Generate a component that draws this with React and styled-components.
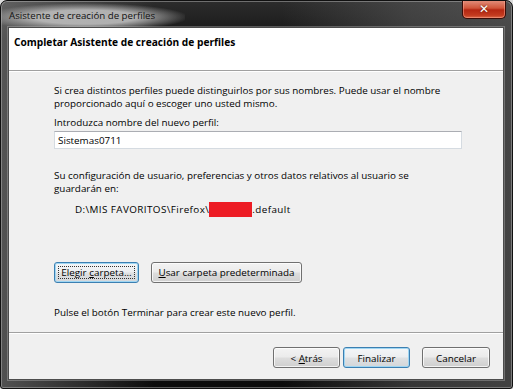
import React from "react";
import styled, { createGlobalStyle, css } from "styled-components";

const Global = createGlobalStyle`
  html, body { margin: 0; padding: 0; background: #dcdcdc; }
  body { width: 513px; height: 389px; overflow: hidden; }
  * { box-sizing: border-box; }
`;

const FONT = `"Open Sans", "Noto Sans", sans-serif`;

const Window = styled.div`
  width: 513px;
  height: 389px;
  display: flex;
  flex-direction: column;
  border: 1px solid #101010;
  border-radius: 7px 7px 3px 3px;
  box-shadow: inset 0 0 0 1px rgba(190, 190, 190, 0.45);
  background:
    linear-gradient(90deg, rgba(150,150,150,0.5) 0, rgba(0,0,0,0) 30%, rgba(0,0,0,0) 55%, rgba(95,95,95,0.5) 80%, rgba(110,110,110,0.55) 100%),
    linear-gradient(180deg, #2c2c2c 0, #161616 10%, #0c0c0c 100%);
  font-family: ${FONT};
  overflow: hidden;
`;

const TitleBar = styled.div`
  height: 26px;
  display: flex;
  align-items: flex-start;
  justify-content: space-between;
  padding: 0 6px 0 0;
`;

const Title = styled.div`
  height: 26px;
  display: flex;
  align-items: center;
  padding: 2px 30px 0 8px;
  font-size: 9.7px;
  color: #111;
  background: radial-gradient(ellipse 56% 54% at 46% 62%, rgba(190,190,190,0.9) 50%, rgba(190,190,190,0) 100%);
`;

const CloseButton = styled.div`
  width: 44px;
  height: 19px;
  margin-top: -1px;
  border: 1px solid #3a0b06;
  border-top: none;
  border-radius: 0 0 5px 5px;
  box-shadow: inset 0 0 0 1px rgba(255, 170, 150, 0.5);
  background: linear-gradient(180deg, #e49380 0%, #d0553a 45%, #b52712 55%, #c33a1f 85%, #db6a48 100%);
  display: flex;
  align-items: center;
  justify-content: center;
  color: #fff;
  font-family: "DejaVu Sans", sans-serif;
  font-weight: bold;
  font-size: 12px;
  text-shadow: 0 0 2px #4a1208;
`;

const Client = styled.div`
  flex: 1;
  margin: 0 8px 8px 7px;
  border: 1px solid #4c4c4c;
  box-shadow: 0 0 0 1px rgba(200, 200, 200, 0.35);
  display: flex;
  flex-direction: column;
  background: #f0f0f0;
`;

const Header = styled.div`
  height: 42px;
  background: #fff;
  padding: 7px 0 0 5px;
  font-size: 10.2px;
  font-weight: 700;
  color: #000;
`;

const Separator = styled.div`
  height: 2px;
  border-top: 1px solid #a0a0a0;
  border-bottom: 1px solid #ffffff;
`;

const Body = styled.div`
  flex: 1;
  padding: 12px 30px 0 45px;
  display: flex;
  flex-direction: column;
  font-size: 9.85px;
  line-height: 13px;
  color: #000;
`;

const Text = styled.div`
  margin-top: ${(p) => p.$mt || 0}px;
  padding-left: ${(p) => p.$indent || 0}px;
  letter-spacing: ${(p) => p.$ls || 0}px;
  white-space: nowrap;
`;

const Input = styled.div`
  margin-top: ${(p) => p.$mt || 0}px;
  width: 408px;
  height: 18px;
  background: #fff;
  border: 1px solid #d5dbe1;
  border-top-color: #abadb3;
  padding: 0 3px;
  display: flex;
  align-items: center;
`;

const Redact = styled.span`
  display: inline-block;
  width: 43px;
  height: 15px;
  vertical-align: -4px;
  background: #ed1c24;
`;

const ButtonRow = styled.div`
  margin-top: ${(p) => p.$mt || 0}px;
  display: flex;
  gap: ${(p) => p.$gap || 12}px;
  justify-content: ${(p) => (p.$right ? "flex-end" : "flex-start")};
`;

const Button = styled.div`
  position: relative;
  height: 21px;
  min-width: ${(p) => p.$w || 66}px;
  margin-left: ${(p) => p.$ml || 0}px;
  padding: 0 6px;
  display: flex;
  align-items: center;
  justify-content: center;
  font-size: 9.85px;
  color: #000;
  border: 1px solid #707070;
  border-radius: 3px;
  background: linear-gradient(180deg, #f3f3f3 0%, #ebebeb 48%, #dddddd 52%, #cfcfcf 100%);
  box-shadow: inset 0 0 0 1px rgba(255, 255, 255, 0.75);
  white-space: nowrap;
  ${(p) => p.$default && css`
    border-color: #3c7fb1;
    box-shadow: inset 0 0 0 1px #9fd6f3;
    background: linear-gradient(180deg, #f4f6f8 0%, #eceef0 48%, #dfe1e3 52%, #d3d6d9 100%);
  `}
  ${(p) => p.$focus && css`
    &::after {
      content: "";
      position: absolute;
      inset: 3px;
      border: 1px dotted #333;
    }
  `}
`;

const Footer = styled.div`
  height: 45px;
  padding: 13px 13px 0 0;
`;

const U = styled.span`
  text-decoration: underline;
  text-underline-offset: 1px;
`;

export default function App() {
  return (
    <>
      <Global />
      <Window>
        <TitleBar>
          <Title>Asistente de creación de perfiles</Title>
          <CloseButton>✕</CloseButton>
        </TitleBar>
        <Client>
          <Header>Completar Asistente de creación de perfiles</Header>
          <Separator />
          <Body>
            <Text>Si crea distintos perfiles puede distinguirlos por sus nombres. Puede usar el nombre</Text>
            <Text>proporcionado aquí o escoger uno usted mismo.</Text>
            <Text $mt={6}>Introduzca nombre del nuevo perfil:</Text>
            <Input $mt={2}>Sistemas0711</Input>
            <Text $mt={20}>Su configuración de usuario, preferencias y otros datos relativos al usuario se</Text>
            <Text>guardarán en:</Text>
            <Text $mt={7} $indent={21} $ls={0.42}>
              D:\MIS FAVORITOS\Firefox\<Redact />.default
            </Text>
            <ButtonRow $mt={45}>
              <Button $default $focus $w={85}>
                <span>Elegir <U>c</U>arpeta...</span>
              </Button>
              <Button $w={151}>
                <span><U>U</U>sar carpeta predeterminada</span>
              </Button>
            </ButtonRow>
            <Text $mt={23}>Pulse el botón Terminar para crear este nuevo perfil.</Text>
          </Body>
          <Separator />
          <Footer>
            <ButtonRow $right $gap={3}>
              <Button $w={67}>
                <span>&lt; <U>A</U>trás</span>
              </Button>
              <Button $default $w={67}>
                <span>Finalizar</span>
              </Button>
              <Button $w={68} $ml={9}>
                <span>Cancelar</span>
              </Button>
            </ButtonRow>
          </Footer>
        </Client>
      </Window>
    </>
  );
}
